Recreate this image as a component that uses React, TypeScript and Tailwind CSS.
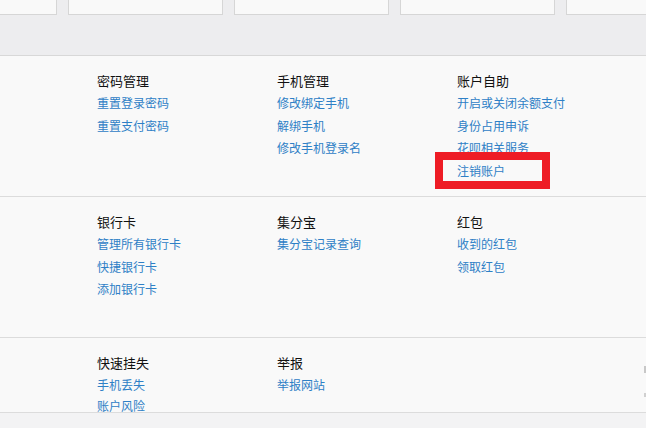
import React from "react";

type Col = { title: string; links: string[] };

const sections: { cols: Col[]; h: string; lead: string }[] = [
  {
    h: "h-[141px]",
    lead: "leading-[22.5px]",
    cols: [
      { title: "密码管理", links: ["重置登录密码", "重置支付密码"] },
      { title: "手机管理", links: ["修改绑定手机", "解绑手机", "修改手机登录名"] },
      { title: "账户自助", links: ["开启或关闭余额支付", "身份占用申诉", "花呗相关服务", "注销账户"] },
    ],
  },
  {
    h: "h-[141px]",
    lead: "leading-[22.5px]",
    cols: [
      { title: "银行卡", links: ["管理所有银行卡", "快捷银行卡", "添加银行卡"] },
      { title: "集分宝", links: ["集分宝记录查询"] },
      { title: "红包", links: ["收到的红包", "领取红包"] },
    ],
  },
  {
    h: "h-[75px]",
    lead: "leading-[21px]",
    cols: [
      { title: "快速挂失", links: ["手机丢失", "账户风险"] },
      { title: "举报", links: ["举报网站"] },
    ],
  },
];

export default function App() {
  return (
    <div
      className="relative w-[646px] h-[428px] overflow-hidden bg-[#f3f3f4]"
      style={{ fontFamily: '"Noto Sans CJK SC", "Noto Sans", sans-serif' }}
    >
      {/* top gray band with cards */}
      <div className="h-[56px] bg-[#ededef] border-b border-[#d8d8d8]">
        <div className="flex gap-[11px] -ml-[98px]">
          {[0, 1, 2, 3, 4].map((i) => (
            <div
              key={i}
              className="w-[155px] h-[15px] shrink-0 bg-[#f9f9f9] border border-t-0 border-[#d6d6d6]"
            />
          ))}
        </div>
      </div>

      {sections.map((s, si) => (
        <div
          key={si}
          className={`${s.h} bg-[#f9f9f9] border-b border-[#dcdcdc] pl-[97px] pt-[14px] overflow-visible`}
        >
          <div className="flex">
            {s.cols.map((c, ci) => (
              <div key={ci} className="w-[180px] shrink-0">
                <div className="text-[13px] leading-[22px] text-[#111]">{c.title}</div>
                {c.links.map((l) => (
                  <div key={l} className={`text-[12px] ${s.lead} text-[#2e80c6]`}>
                    {l}
                  </div>
                ))}
              </div>
            ))}
          </div>
        </div>
      ))}

      {/* red highlight box */}
      <div className="absolute left-[435px] top-[152px] w-[115px] h-[37px] border-[8px] border-[#ee1c25]" />

      {/* faint marks on the right edge */}
      <div className="absolute left-[644px] top-[366px] w-[2px] h-[7px] bg-[#c8c8c8]" />
      <div className="absolute left-[644px] top-[393px] w-[2px] h-[4px] bg-[#d0d0d0]" />
    </div>
  );
}
